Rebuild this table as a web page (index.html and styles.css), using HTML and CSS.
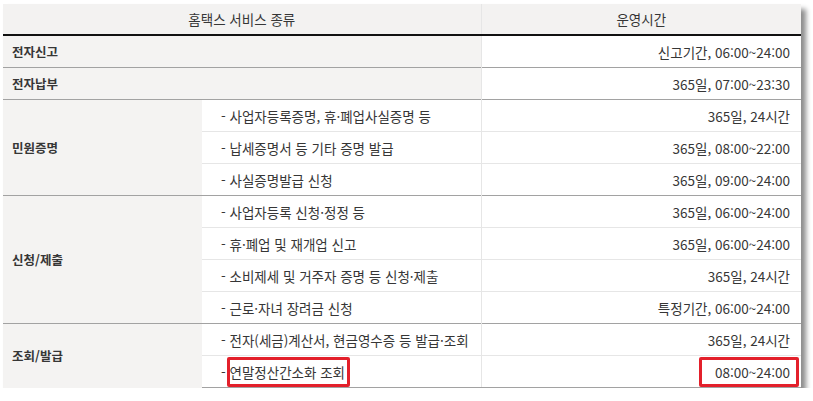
FILE: index.html
```html
<!DOCTYPE html>
<html lang="ko">
<head>
<meta charset="utf-8">
<link rel="stylesheet" href="styles.css">
</head>
<body>
<div class="frame">
<table class="svc">
  <colgroup>
    <col class="c-cat">
    <col class="c-sub">
    <col class="c-time">
  </colgroup>
  <thead>
    <tr><th colspan="2">홈택스 서비스 종류</th><th>운영시간</th></tr>
  </thead>
  <tbody>
    <tr class="grp"><td class="cat" colspan="2">전자신고</td><td class="time">신고기간, 06:00~24:00</td></tr>
    <tr class="grp"><td class="cat" colspan="2">전자납부</td><td class="time">365일, 07:00~23:30</td></tr>
    <tr class="grp"><td class="cat" rowspan="3">민원증명</td><td class="sub">- 사업자등록증명, 휴·폐업사실증명 등</td><td class="time">365일, 24시간</td></tr>
    <tr><td class="sub">- 납세증명서 등 기타 증명 발급</td><td class="time">365일, 08:00~22:00</td></tr>
    <tr><td class="sub">- 사실증명발급 신청</td><td class="time">365일, 09:00~24:00</td></tr>
    <tr class="grp"><td class="cat" rowspan="4">신청/제출</td><td class="sub">- 사업자등록 신청·정정 등</td><td class="time">365일, 06:00~24:00</td></tr>
    <tr><td class="sub">- 휴·폐업 및 재개업 신고</td><td class="time">365일, 06:00~24:00</td></tr>
    <tr><td class="sub">- 소비제세 및 거주자 증명 등 신청·제출</td><td class="time">365일, 24시간</td></tr>
    <tr><td class="sub">- 근로·자녀 장려금 신청</td><td class="time">특정기간, 06:00~24:00</td></tr>
    <tr class="grp"><td class="cat" rowspan="2">조회/발급</td><td class="sub">- 전자(세금)계산서, 현금영수증 등 발급·조회</td><td class="time">365일, 24시간</td></tr>
    <tr class="last"><td class="sub">- <span class="mark mark-sub">연말정산간소화 조회</span></td><td class="time"><span class="mark mark-time">08:00~24:00</span></td></tr>
  </tbody>
</table>
</div>
</body>
</html>
```

FILE: styles.css
```css
html, body {
  margin: 0;
  padding: 0;
  background: #ffffff;
}
body {
  padding: 4px 0 0 3px;
  font-family: "Noto Sans CJK KR", "Noto Sans", sans-serif;
  font-size: 13.5px;
  line-height: 18px;
  color: #363636;
}
.frame {
  width: 798px;
  box-shadow: 5px 5px 5px rgba(0, 0, 0, 0.45);
}
.svc {
  width: 798px;
  border-collapse: collapse;
  table-layout: fixed;
}
.c-cat { width: 199px; }
.c-sub { width: 279px; }
.c-time { width: 320px; }
.svc th {
  height: 30px;
  background: #f3f2f1;
  font-weight: normal;
  text-align: center;
  border-bottom: 2px solid #111111;
  padding: 0;
}
.svc th + th {
  border-left: 1px solid #e6e6e6;
}
.svc td {
  height: 31px;
  padding: 0;
  border-top: 1px solid #e6e6e6;
  vertical-align: middle;
  white-space: nowrap;
}
.svc tr.grp td {
  border-top: 1px solid #a2a2a2;
}
.svc tbody tr:first-child td {
  border-top: none;
}
.svc tr.last td {
  border-bottom: 1px solid #a2a2a2;
}
.cat {
  background: #f4f3f2;
  font-weight: bold;
  font-size: 12.5px;
  padding-left: 9px !important;
}
.sub {
  background: #ffffff;
  padding-left: 19px !important;
}
.time {
  background: #ffffff;
  text-align: right;
  padding-right: 11px !important;
  border-left: 1px solid #e6e6e6;
}
.mark {
  position: relative;
}
.mark::after {
  content: "";
  position: absolute;
  border: 3px solid #e3202b;
  border-radius: 2px;
}
.mark-sub::after {
  left: -2px;
  right: -5px;
  top: -5px;
  bottom: -5px;
}
.mark-time::after {
  left: -16px;
  right: -9px;
  top: -5px;
  bottom: -5px;
}
```
